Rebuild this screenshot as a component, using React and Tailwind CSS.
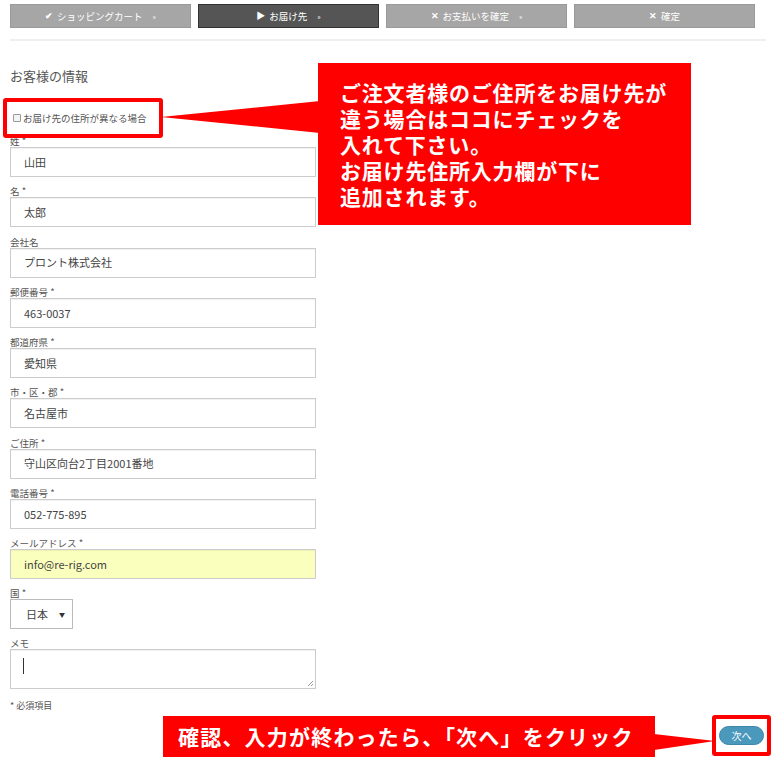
import React from 'react';

const tabs = [
  { icon: '✔', label: 'ショッピングカート', active: false, arrow: true },
  { icon: '▶', label: 'お届け先', active: true, arrow: true },
  { icon: '✕', label: 'お支払いを確定', active: false, arrow: true },
  { icon: '✕', label: '確定', active: false, arrow: false },
];

const fields = [
  { label: '姓 *', value: '山田' },
  { label: '名 *', value: '太郎' },
  { label: '会社名', value: 'プロント株式会社' },
  { label: '郵便番号 *', value: '463-0037' },
  { label: '都道府県 *', value: '愛知県' },
  { label: '市・区・郡 *', value: '名古屋市' },
  { label: 'ご住所 *', value: '守山区向台2丁目2001番地' },
  { label: '電話番号 *', value: '052-775-895' },
  { label: 'メールアドレス *', value: 'info@re-rig.com', autofill: true },
];

const calloutLines = [
  'ご注文者様のご住所をお届け先が',
  '違う場合はココにチェックを',
  '入れて下さい。',
  'お届け先住所入力欄が下に',
  '追加されます。',
];

const Field = ({ label, value, autofill }) => (
  <div className="mb-[8.25px]">
    <div className="h-[12px] text-[9.5px] leading-[12px] text-[#555]">{label}</div>
    <div
      className={`h-[30px] w-[306px] border border-[#ccc] shadow-[inset_0_1px_1px_rgba(0,0,0,0.06)] pl-[13px] flex items-center text-[11px] text-[#444] ${
        autofill ? 'bg-[#faffbd]' : 'bg-white'
      }`}
    >
      {value}
    </div>
  </div>
);

export default function App() {
  return (
    <div
      className="relative w-[778px] h-[760px] bg-white overflow-hidden"
      style={{ fontFamily: '"Noto Sans CJK JP", "Noto Sans", sans-serif' }}
    >
      {/* step tabs */}
      <div className="pt-[4px] pl-[10px]">
        <div className="flex gap-[7px]">
          {tabs.map((t) => (
            <div
              key={t.label}
              className={`w-[181px] h-[24px] flex items-center justify-center gap-[4px] text-[9.5px] text-white border ${
                t.active ? 'bg-[#555] border-[#333]' : 'bg-[#a6a6a6] border-[#9a9a9a]'
              }`}
            >
              <span className="text-[9px] font-bold">{t.icon}</span>
              <span>{t.label}</span>
              {t.arrow && <span className="ml-[6px] text-[7px]">»</span>}
            </div>
          ))}
        </div>
        <div className="mt-[11px] w-[756px] border-t-2 border-[#eee]" />
      </div>

      {/* form */}
      <div className="pl-[10px]">
        <div className="mt-[28px] h-[14px] text-[13px] leading-[14px] text-[#555]">お客様の情報</div>
        <div className="mt-[28px] h-[14px] flex items-center gap-[2px] pl-[3px] text-[9.5px] text-[#555]">
          <span className="w-[8px] h-[8px] border border-[#999] bg-[#f4f4f4] rounded-[1px]" />
          <span>お届け先の住所が異なる場合</span>
        </div>
        <div className="mt-[10px]">
          {fields.map((f) => (
            <Field key={f.label} {...f} />
          ))}
        </div>
        <div className="h-[12px] text-[9.5px] leading-[12px] text-[#555]">国 *</div>
        <div className="h-[30px] w-[63px] border border-[#bbb] bg-white flex items-center pl-[15px] text-[11px] text-[#444] relative">
          日本
          <span className="absolute right-[7px] text-[6px] text-[#333]">▼</span>
        </div>
        <div className="mt-[8px] h-[12px] text-[9.5px] leading-[12px] text-[#555]">メモ</div>
        <div className="h-[40px] w-[306px] border border-[#ccc] bg-white relative shadow-[inset_0_1px_1px_rgba(0,0,0,0.06)]">
          <div className="absolute left-[12px] top-[8px] w-[1px] h-[16px] bg-[#333]" />
          <svg className="absolute right-[1px] bottom-[1px]" width="7" height="7" viewBox="0 0 7 7">
            <path d="M6 1L1 6M6 4L4 6" stroke="#999" strokeWidth="1" />
          </svg>
        </div>
        <div className="mt-[10px] text-[9px] text-[#555]">* 必須項目</div>
      </div>

      {/* annotation pointers */}
      <svg className="absolute inset-0 pointer-events-none" width="778" height="760">
        <polygon points="161,117 320,101 320,133" fill="#ff0000" />
        <polygon points="654,734 654,750 715,741" fill="#ff0000" />
      </svg>

      {/* checkbox highlight */}
      <div className="absolute left-[3px] top-[98px] w-[160px] h-[40px] border-4 border-[#ff0000] rounded-[3px]" />

      {/* top callout */}
      <div className="absolute left-[318px] top-[63px] w-[373px] h-[162px] bg-[#ff0000] pl-[22px] pt-[16px] text-white font-bold text-[21px] tracking-[0.8px]">
        {calloutLines.map((line) => (
          <div key={line} className="h-[26px] leading-[26px] overflow-visible whitespace-nowrap">
            {line}
          </div>
        ))}
      </div>

      {/* bottom callout */}
      <div className="absolute left-[163px] top-[716px] w-[492px] h-[41px] bg-[#ff0000] flex items-center pl-[15px] text-white font-bold text-[21px] tracking-[1.2px]">
        確認、入力が終わったら、「次へ」をクリック
      </div>

      {/* next button */}
      <div className="absolute left-[712px] top-[715px] w-[59px] h-[41px] border-4 border-[#ff0000] rounded-[3px] flex items-center justify-center">
        <div className="w-[45px] h-[19px] rounded-full bg-[#4a98bc] border border-[#3f87a8] flex items-center justify-center text-[10px] text-white">
          次へ
        </div>
      </div>
    </div>
  );
}
